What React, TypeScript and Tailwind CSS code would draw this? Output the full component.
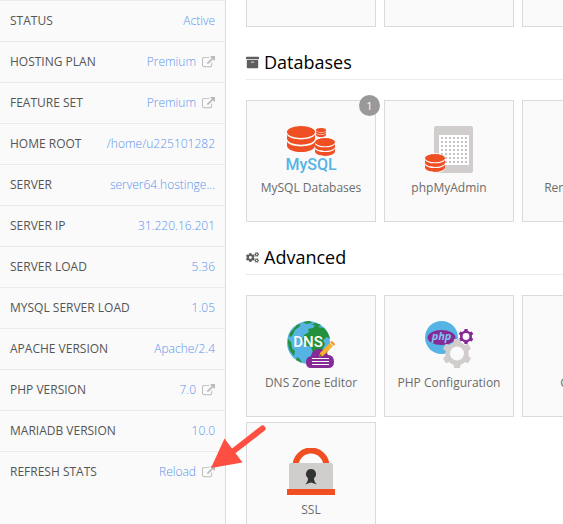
import type { ReactNode } from "react";
import { FaArchive, FaCogs } from "react-icons/fa";

type Stat = { label: string; value: string; external?: boolean };

const stats: Stat[] = [
  { label: "STATUS", value: "Active" },
  { label: "HOSTING PLAN", value: "Premium", external: true },
  { label: "FEATURE SET", value: "Premium", external: true },
  { label: "HOME ROOT", value: "/home/u225101282" },
  { label: "SERVER", value: "server64.hostinge..." },
  { label: "SERVER IP", value: "31.220.16.201" },
  { label: "SERVER LOAD", value: "5.36" },
  { label: "MYSQL SERVER LOAD", value: "1.05" },
  { label: "APACHE VERSION", value: "Apache/2.4" },
  { label: "PHP VERSION", value: "7.0", external: true },
  { label: "MARIADB VERSION", value: "10.0" },
  { label: "REFRESH STATS", value: "Reload", external: true },
];

function ExternalIcon() {
  return (
    <svg viewBox="0 0 1792 1792" className="size-[13px] text-[#b9b9b9]" fill="currentColor" aria-hidden="true">
      <path d="M1408 928v320q0 119-84.5 203.5t-203.5 84.5h-832q-119 0-203.5-84.5t-84.5-203.5v-832q0-119 84.5-203.5t203.5-84.5h704q14 0 23 9t9 23v64q0 14-9 23t-23 9h-704q-66 0-113 47t-47 113v832q0 66 47 113t113 47h832q66 0 113-47t47-113v-320q0-14 9-23t23-9h64q14 0 23 9t9 23zm384-864v512q0 26-19 45t-45 19-45-19l-176-176-652 652q-10 10-23 10t-23-10l-114-114q-10-10-10-23t10-23l652-652-176-176q-19-19-19-45t19-45 45-19h512q26 0 45 19t19 45z" />
    </svg>
  );
}

/* A stack of three discs, seen slightly from above. */
function Discs({ x, y, w, h }: { x: number; y: number; w: number; h: number }) {
  return (
    <svg x={x} y={y} width={w} height={h} viewBox="0 0 28 26" preserveAspectRatio="none">
      <g fill="#f04e23">
        <ellipse cx="14" cy="6" rx="14" ry="6" />
        <path d="M0 8.5C3 15 25 15 28 8.5V13C26 20.5 2 20.5 0 13Z" />
        <path d="M0 15.5C3 22 25 22 28 15.5V20C26 28 2 28 0 20Z" />
      </g>
    </svg>
  );
}

function Gear({ cx, cy, r, hole, fill, turn }: { cx: number; cy: number; r: number; hole: number; fill: string; turn: number }) {
  return (
    <g transform={`translate(${cx} ${cy}) rotate(${turn})`}>
      {[0, 60, 120, 180, 240, 300].map((angle) => (
        <path
          key={angle}
          transform={`rotate(${angle})`}
          d={`M${-r * 0.28} ${-r * 0.6}L${-r * 0.2} ${-r}H${r * 0.2}L${r * 0.28} ${-r * 0.6}Z`}
          fill={fill}
        />
      ))}
      <circle r={(r * 0.8 + hole) / 2} fill="none" stroke={fill} strokeWidth={r * 0.8 - hole} />
    </g>
  );
}

function MySqlIcon() {
  return (
    <svg viewBox="0 0 48 48" className="size-12 overflow-visible" aria-hidden="true">
      <Discs x={0} y={0} w={28} h={26} />
      <Discs x={29} y={2} w={10} h={9} />
      <Discs x={28} y={12} w={20} h={18} />
      <text x="24" y="44" textAnchor="middle" fill="#56b4e4" className="font-['Roboto',sans-serif] text-[16px] font-medium">
        MySQL
      </text>
    </svg>
  );
}

function PhpMyAdminIcon() {
  const steps = [0, 1, 2, 3, 4, 5, 6];
  return (
    <svg viewBox="0 0 48 48" className="size-12" aria-hidden="true">
      <rect x="9" y="0" width="39" height="47" rx="2" fill="#d1cdcc" />
      <rect x="14" y="9" width="30" height="30" fill="#fff" />
      {steps.map((row) =>
        steps.map((col) => (
          <rect key={`${row}-${col}`} x={16 + col * 4} y={11 + row * 4} width="2" height="2" fill="#c6c2c1" />
        )),
      )}
      <path d="M0 33q2-6 10-6t10 6v10q-2 4-10 4T0 43z" fill="#fafafa" />
      <Discs x={0} y={28} w={20} h={18} />
    </svg>
  );
}

function DnsIcon() {
  return (
    <svg viewBox="0 0 48 48" className="size-12 overflow-visible" aria-hidden="true">
      <circle cx="21.500" cy="21.500" r="21.500" fill="#56b4e4" />
      <g fill="#23913b">
        <path d="M24 4l4-2 6 2-3 2 6 1q5 5 6 11l-3-2-4 3 2 4-3 6-4 4-5-1-2-6-6-2-3-5 2-5 5-3-1-3 5-1 2-3z" />
        <path d="M3 12l7-8 4-1-2 3-4 3-3 6-3 1zM1 18l3 3 1 6 3 3-1 5q-6-6-6-14zM10 36l3 2 2 4-6-3z" />
        <path d="M16 1l7-1 2 2-6 1z" />
      </g>
      <path d="M24 47q-5 0-5-6 0-5 5-6 1-7 9-7 6 0 8 6 6 0 6 7 0 6-6 6z" fill="#862a97" />
      <path d="M25 37.500h17M25 40.500h17M25 43.500h17" stroke="#fff" strokeWidth="1" />
      <path d="M33 32l10-10 3 3-10 10-4 1z" fill="#fcb12b" />
      <path d="M43 21l2-1 3 3-1 2z" fill="#f58f20" />
      <path d="M32 36l1-3 2 2z" fill="#8b5a2b" />
      <text x="21" y="26" textAnchor="middle" fill="#fff" className="font-['Roboto',sans-serif] text-[15px] font-medium">
        DNS
      </text>
    </svg>
  );
}

function PhpIcon() {
  return (
    <svg viewBox="0 0 48 48" className="size-12 overflow-visible" aria-hidden="true">
      <circle cx="16.500" cy="16.500" r="16.500" fill="#56b4e4" />
      <ellipse cx="16.500" cy="16.500" rx="14" ry="7.500" fill="#862a97" />
      <text x="16.500" y="19" textAnchor="middle" fill="#7cc5ee" className="font-['Open_Sans',sans-serif] text-[11px] font-bold italic">
        php
      </text>
      <Gear cx={41} cy={15.5} r={7.5} hole={3.4} fill="#862a97" turn={0} />
      <circle cx="32" cy="32.500" r="8" fill="#fafafa" />
      <Gear cx={32} cy={32.5} r={14.5} hole={7} fill="#d1cdcc" turn={0} />
    </svg>
  );
}

function SslIcon() {
  return (
    <svg viewBox="0 0 48 48" className="size-12" aria-hidden="true">
      <path d="M8.500 18a15.500 15.500 0 0 1 31 0" fill="none" stroke="#f04e23" strokeWidth="6" />
      <path d="M4 15h40q2 0 2 2v24H2V17q0-2 2-2z" fill="#d1cdcc" />
      <path d="M0 41h48v6H0z" fill="#f04e23" />
      <path d="M24 21a5 5 0 0 1 3 9q0 4 3 6.500l-6-2-6 2q3-2.500 3-6.500a5 5 0 0 1 3-9z" fill="#333" />
    </svg>
  );
}

function Tile({ label, icon, badge }: { label: string; icon?: ReactNode; badge?: string }) {
  return (
    <button
      type="button"
      className="relative flex h-[122px] flex-col items-center gap-1 border border-[#dadada] bg-[#fafafa] pt-[25px] text-[12px] leading-5 whitespace-nowrap text-[#6b6b6b]"
    >
      <span className="block size-12">{icon}</span>
      {label}
      {badge && (
        <span className="absolute -top-[6px] -right-[5px] flex size-[21px] items-center justify-center rounded-full bg-[#999] text-[11px] text-white">
          {badge}
        </span>
      )}
    </button>
  );
}

function Section({ title, icon, children }: { title: string; icon: ReactNode; children: ReactNode }) {
  return (
    <section className="pt-[23px]">
      <h2 className="mb-5 flex items-center gap-[5px] border-b border-[#eaeaea] pb-[5px] text-[18px] leading-6 text-black">
        {icon}
        {title}
      </h2>
      <div className="grid grid-cols-[repeat(3,130px)] gap-x-2 gap-y-[5px]">{children}</div>
    </section>
  );
}

export default function App() {
  return (
    <div className="relative flex h-screen overflow-hidden bg-white font-['Open_Sans',sans-serif]">
      <aside className="w-[226px] shrink-0 border-r border-[#dcdcdc] bg-[#fafafa]">
        <dl className="text-[12px]">
          {stats.map((stat) => (
            <div key={stat.label} className="flex h-[41px] items-center justify-between border-t border-[#ebebeb] px-[10px]">
              <dt className="text-[#555]">{stat.label}</dt>
              <dd className="font-light text-[#5b93ee]">
                {stat.external ? (
                  <a href="#" className="flex items-center gap-[6px]">
                    {stat.value}
                    <ExternalIcon />
                  </a>
                ) : (
                  stat.value
                )}
              </dd>
            </div>
          ))}
        </dl>
      </aside>

      <main className="min-w-0 flex-1 overflow-hidden pl-5">
        <div className="grid grid-cols-[repeat(3,130px)] gap-x-2">
          <div className="h-[27px] border border-t-0 border-[#dadada] bg-[#fafafa]" />
          <div className="h-[27px] border border-t-0 border-[#dadada] bg-[#fafafa]" />
          <div className="h-[27px] border border-t-0 border-[#dadada] bg-[#fafafa]" />
        </div>
        <Section title="Databases" icon={<FaArchive className="size-[13px] text-[#5e5e5e]" />}>
          <Tile label="MySQL Databases" icon={<MySqlIcon />} badge="1" />
          <Tile label="phpMyAdmin" icon={<PhpMyAdminIcon />} />
          <Tile label="Remote MySQL" />
        </Section>
        <Section title="Advanced" icon={<FaCogs className="size-[13px] text-[#5e5e5e]" />}>
          <Tile label="DNS Zone Editor" icon={<DnsIcon />} />
          <Tile label="PHP Configuration" icon={<PhpIcon />} />
          <Tile label="Cron Jobs" />
          <Tile label="SSL" icon={<SslIcon />} />
        </Section>
      </main>

      <svg viewBox="0 0 56 44" className="pointer-events-none absolute top-[425px] left-[211px] h-11 w-14" aria-hidden="true">
        <path d="M51.500 3.500L20 28" stroke="#ff4f42" strokeWidth="6" strokeLinecap="round" />
        <path d="M0 43L13.500 13.500L31.500 37.500Z" fill="#ff4f42" />
      </svg>
    </div>
  );
}
